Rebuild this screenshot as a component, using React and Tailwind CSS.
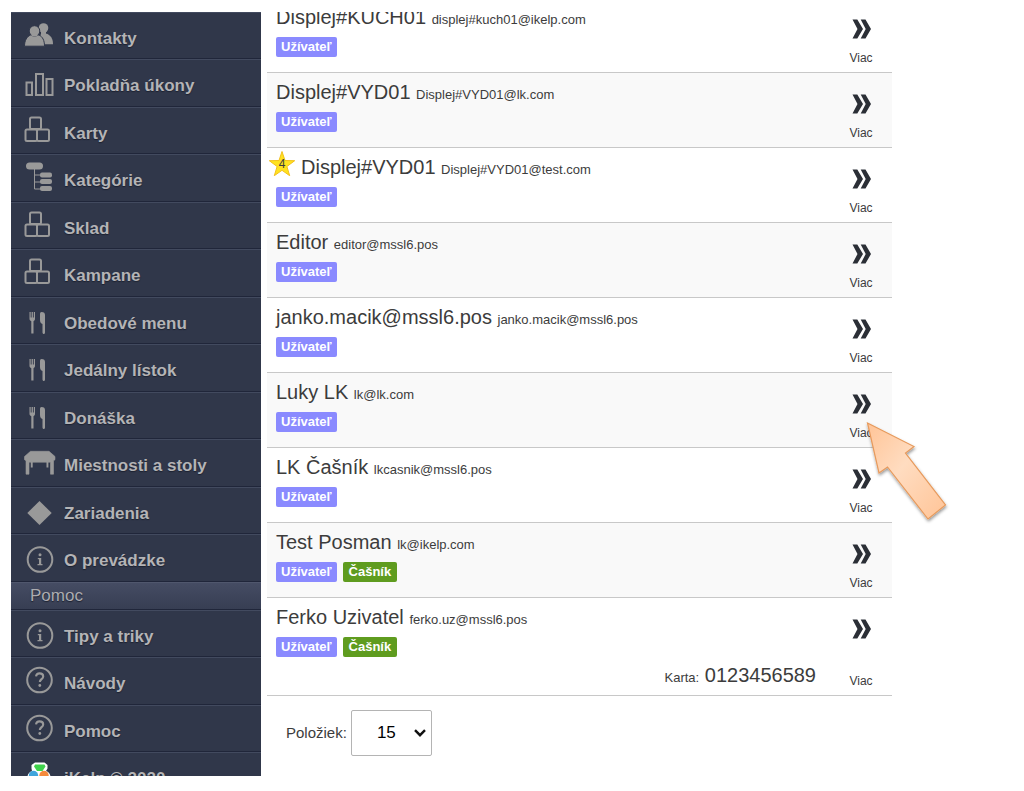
import React from "react";

function Icon({ children }) {
  return (
    <svg viewBox="0 0 32 32" className="size-8 shrink-0 text-[#999999]" fill="currentColor" aria-hidden="true">
      {children}
    </svg>
  );
}

const People = () => (
  <Icon>
    <circle cx="19.500" cy="8" r="4.800" />
    <path d="M17 11h5v4h-5z" />
    <path d="M15 24.200v-5l2-5.500h6c3.800 1.800 6 5 6 10.500z" />
    <g stroke="#30374a" strokeWidth="1">
      <path d="M.500 26.200c0-6 2.500-9.500 6-11.200h8.500c3.500 1.700 5.500 5.200 5.500 11.200z" />
      <circle cx="10.500" cy="11" r="5.300" />
    </g>
    <path d="M7.500 14h6v2.500h-6z" />
  </Icon>
);

const Bars = () => (
  <Icon>
    <g fill="none" stroke="currentColor" strokeWidth="2">
      <rect x="2.500" y="15.500" width="5.500" height="12.500" />
      <rect x="12" y="7" width="7" height="21" />
      <rect x="22.500" y="12" width="6" height="16" />
    </g>
  </Icon>
);

const Cubes = () => (
  <Icon>
    <g fill="none" stroke="currentColor" strokeWidth="2">
      <rect x="6" y="2.500" width="11" height="11.500" rx="1.500" />
      <rect x="1.500" y="14.500" width="11.500" height="11.500" rx="1.500" />
      <rect x="13" y="14.500" width="12" height="11.500" rx="1.500" />
    </g>
  </Icon>
);

const Tree = () => (
  <Icon>
    <rect x="2" y="0.500" width="17" height="7" rx="3.500" />
    <path d="M10.500 7v20h7M10.500 13h7M10.500 20h7" fill="none" stroke="currentColor" strokeWidth="1" />
    <rect x="16" y="10.500" width="12" height="5" rx="2" />
    <rect x="16" y="17" width="12" height="5" rx="2" />
    <rect x="16" y="24" width="12" height="5" rx="2" />
  </Icon>
);

const Cutlery = () => (
  <Icon>
    <path d="M5.500 7h1.200v5.500h.9V7h1.300v5.500h.9V7H11v7c0 1-.6 1.800-1.500 2.200V28.500H7.300V16.200C6.200 15.800 5.500 15 5.500 14z" />
    <path d="M17.500 7c2.500 0 3.500 1 3.500 3v17.500c0 .8-.5 1.500-1.200 1.500s-1.300-.7-1.300-1.500V19c-1.500-.5-2.500-1.500-2.500-4V9c0-1.200.5-2 1.500-2z" />
  </Icon>
);

const Table = () => (
  <Icon>
    <path d="M6.500 4.300h18.500L31 9.500v3.200l-1.500 1v13.500h-3v-12H5v12H2V13.700l-1.500-1V9.500z" stroke="currentColor" strokeWidth="0.600" strokeLinejoin="round" />
    <path d="M6.800 15h1.900v5.500H6.800zM22.500 15h1.900v5.500h-1.900z" />
  </Icon>
);

const Diamond = () => (
  <Icon>
    <path d="M15.500 6 27.700 18 15.500 30 3.300 18z" />
  </Icon>
);

const Info = () => (
  <Icon>
    <circle cx="16" cy="17.500" r="12.300" fill="none" stroke="currentColor" strokeWidth="2" />
    <circle cx="16" cy="12.700" r="1.500" />
    <path d="M13.800 16h3.400v6h1.300v1.300h-5V22H15v-4.700h-1.200z" />
  </Icon>
);

const Question = () => (
  <Icon>
    <circle cx="15.500" cy="15" r="12.300" fill="none" stroke="currentColor" strokeWidth="2" />
    <path d="M12 11.300c.3-1.900 1.600-2.900 3.500-2.900 2.200 0 3.700 1.100 3.700 3 0 2.600-3.400 2.900-3.400 5.700" fill="none" stroke="currentColor" strokeWidth="2.100" />
    <circle cx="15.800" cy="20.500" r="1.400" />
  </Icon>
);

const Logo = () => (
  <Icon>
    <path d="M11 2.500h9.500l3 2.500v3.500l-1.500 2.500c3 1 4.500 3.500 4.500 6v4h-23v-4c0-3 2-5 4.500-6L7.500 8.500V5z" fill="#fff" />
    <path d="M11 4.500h9.500l1 2-3 4.500h-5.500l-3-4.500z" fill="#3fd24c" />
    <circle cx="9.500" cy="15.500" r="4.700" fill="#3fa5dc" />
    <circle cx="20" cy="15.500" r="4.700" fill="#f58a3c" />
  </Icon>
);

const MAIN_MENU = [
  ["Kontakty", People],
  ["Pokladňa úkony", Bars],
  ["Karty", Cubes],
  ["Kategórie", Tree],
  ["Sklad", Cubes],
  ["Kampane", Cubes],
  ["Obedové menu", Cutlery],
  ["Jedálny lístok", Cutlery],
  ["Donáška", Cutlery],
  ["Miestnosti a stoly", Table],
  ["Zariadenia", Diamond],
  ["O prevádzke", Info],
];

const HELP_MENU = [
  ["Tipy a triky", Info],
  ["Návody", Question],
  ["Pomoc", Question],
  ["iKelp © 2020", Logo],
];

function Menu({ items }) {
  return (
    <ul>
      {items.map(([label, Glyph]) => (
        <li key={label} className="odd:h-[47px] even:h-12">
          <a
            href="#"
            className="flex h-full items-center gap-2 border-t border-b border-t-[#424a5f] border-b-[#20263a] bg-[#30374a] pl-[13px] text-[17px] font-bold text-[#b4b4b6] [text-shadow:0_1px_1px_#1c2130]"
          >
            <Glyph />
            <span className="pt-[6px]">{label}</span>
          </a>
        </li>
      ))}
    </ul>
  );
}

const USERS = [
  { name: "Displej#KUCH01", email: "displej#kuch01@ikelp.com" },
  { name: "Displej#VYD01", email: "Displej#VYD01@lk.com" },
  { name: "Displej#VYD01", email: "Displej#VYD01@test.com", star: 4 },
  { name: "Editor", email: "editor@mssl6.pos" },
  { name: "janko.macik@mssl6.pos", email: "janko.macik@mssl6.pos" },
  { name: "Luky LK", email: "lk@lk.com", pointed: true },
  { name: "LK Čašník", email: "lkcasnik@mssl6.pos" },
  { name: "Test Posman", email: "lk@ikelp.com", waiter: true },
  { name: "Ferko Uzivatel", email: "ferko.uz@mssl6.pos", waiter: true, card: "0123456589" },
];

function Star({ value }) {
  return (
    <span className="relative -ml-2 mr-[5px] flex size-7 shrink-0 items-center justify-center self-start pt-1">
      <svg viewBox="0 0 28 28" className="absolute inset-0 size-7" aria-hidden="true">
        <path
          d="M14 3.500l3 9 9.700.2-7.800 5.800 2.800 9.200-7.700-5.400-7.700 5.400 2.800-9.200-7.800-5.800 9.700-.2z"
          fill="#ffe31f"
          stroke="#f3c01c"
          strokeWidth="1"
        />
      </svg>
      <span className="relative text-[12px] leading-none">{value}</span>
    </span>
  );
}

function Pointer() {
  return (
    <svg viewBox="860 418 92 110" className="pointer-events-none absolute top-[45px] -right-[60px] z-10 h-[110px] w-[92px]" aria-hidden="true">
      <defs>
        <linearGradient id="pointer-fill" x1="0" y1="0" x2="1" y2="1">
          <stop offset="0" stopColor="#ffc497" />
          <stop offset="0.450" stopColor="#ffdcc0" />
          <stop offset="1" stopColor="#ffc497" />
        </linearGradient>
        <filter id="pointer-shadow" x="-20%" y="-20%" width="140%" height="140%">
          <feDropShadow dx="0.500" dy="2" stdDeviation="1.500" floodColor="#000" floodOpacity="0.400" />
        </filter>
      </defs>
      <path
        d="M867.500 423 914 446.500 905.500 453 945.500 505 928 519 887.500 467 879 473z"
        fill="url(#pointer-fill)"
        stroke="#e79a5c"
        strokeWidth="1.200"
        filter="url(#pointer-shadow)"
      />
    </svg>
  );
}

function UserRow({ user }) {
  return (
    <li className="relative flex min-h-[75px] border-b border-[#c8c8c8] pl-[9px] even:bg-[#f9f9f9]">
      <div className="flex flex-1 flex-col">
        <div className="flex h-[39px] items-center pb-[2px]">
          {user.star && <Star value={user.star} />}
          <p className="text-[20px]">
            {user.name} <span className="text-[13px]">{user.email}</span>
          </p>
        </div>
        <div className="flex gap-[6px] text-[13px] leading-5 font-bold text-white">
          <span className="rounded-[2px] bg-[#8a8aff] px-[5px]">Užívateľ</span>
          {user.waiter && <span className="rounded-[2px] bg-[#5f9c1f] px-[6px]">Čašník</span>}
        </div>
        {user.card && (
          <p className="pt-[2px] pr-[14px] pb-1 text-right text-[20px] leading-8">
            <span className="text-[13px] leading-none">Karta:</span> {user.card}
          </p>
        )}
      </div>
      <a href="#" className="flex w-[62px] flex-col items-center justify-between pt-[21px] pb-[6px] text-[12px] leading-4">
        <svg viewBox="0 0 20 20" className="size-5" fill="#2b2f36" aria-hidden="true">
          <path d="M1.500.500h4.800L12 10l-5.700 9.500H1.500L6.500 10zM9.700.500h4.800L20 10l-5.500 9.500H9.700L14.700 10z" />
        </svg>
        Viac
      </a>
      {user.pointed && <Pointer />}
    </li>
  );
}

export default function App() {
  return (
    <div className="flex h-screen bg-white pt-3 pb-[15px] pl-[11px] font-['Liberation_Sans',Arial,sans-serif] text-[#3c3c3c]">
      <div className="flex flex-1 gap-[6px] overflow-hidden">
        <nav className="w-[250px] shrink-0 overflow-hidden bg-[#30374a]">
          <Menu items={MAIN_MENU} />
          <h2 className="flex h-7 items-center border-t border-b border-t-[#50576d] border-b-[#20263a] bg-linear-to-b from-[#454c63] to-[#373e53] pl-[19px] text-[17px] text-[#acacb0] [text-shadow:0_1px_1px_#1c2130]">
            Pomoc
          </h2>
          <Menu items={HELP_MENU} />
        </nav>
        <main className="max-w-[625px] flex-1">
          <ul className="-mt-[14px]">
            {USERS.map((user) => (
              <UserRow key={user.email} user={user} />
            ))}
          </ul>
          <div className="flex items-center gap-1 pt-[14px] pl-[19px] text-[15px]">
            <label htmlFor="page-size">Položiek:</label>
            <div className="relative">
              <select
                id="page-size"
                defaultValue="15"
                className="h-[46px] w-[81px] appearance-none rounded-[2px] border border-[#b4b4b4] bg-white pl-[25px] text-[17px] text-black"
              >
                <option>15</option>
                <option>30</option>
                <option>50</option>
              </select>
              <svg viewBox="0 0 12 8" className="pointer-events-none absolute top-[19px] right-[6px] h-2 w-3" fill="none" stroke="#111" strokeWidth="2.400" aria-hidden="true">
                <path d="M1 1.200 6 6.200 11 1.200" />
              </svg>
            </div>
          </div>
        </main>
      </div>
    </div>
  );
}
